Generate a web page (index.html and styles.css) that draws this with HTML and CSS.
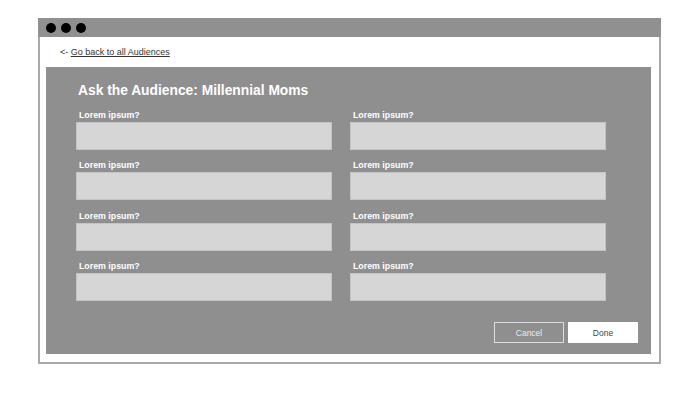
FILE: index.html
```html
<!DOCTYPE html>
<html>
<head>
<meta charset="utf-8">
<link rel="stylesheet" href="styles.css">
</head>
<body>
<div class="page">
  <div class="window">
    <div class="titlebar">
      <span class="dot"></span><span class="dot"></span><span class="dot"></span>
    </div>
    <div class="content">
      <div class="backrow">&lt;- <a class="backlink" href="#">Go back to all Audiences</a></div>
      <div class="panel">
        <h1 class="title">Ask the Audience: Millennial Moms</h1>
        <div class="grid">
          <div class="field"><label class="label">Lorem ipsum?</label><div class="input"></div></div>
          <div class="field"><label class="label">Lorem ipsum?</label><div class="input"></div></div>
          <div class="field"><label class="label">Lorem ipsum?</label><div class="input"></div></div>
          <div class="field"><label class="label">Lorem ipsum?</label><div class="input"></div></div>
          <div class="field"><label class="label">Lorem ipsum?</label><div class="input"></div></div>
          <div class="field"><label class="label">Lorem ipsum?</label><div class="input"></div></div>
          <div class="field"><label class="label">Lorem ipsum?</label><div class="input"></div></div>
          <div class="field"><label class="label">Lorem ipsum?</label><div class="input"></div></div>
        </div>
        <div class="actions">
          <button class="btn btn-cancel">Cancel</button>
          <button class="btn btn-done">Done</button>
        </div>
      </div>
    </div>
  </div>
</div>
</body>
</html>
```
FILE: styles.css
```css
html, body {
  margin: 0;
  padding: 0;
  background: #ffffff;
  font-family: "Liberation Sans", Arial, Helvetica, sans-serif;
}
.page {
  padding: 18px 0 0 38px;
}
.window {
  width: 623px;
}
.titlebar {
  height: 19px;
  background: #909090;
  display: flex;
  align-items: center;
  padding-left: 8px;
  gap: 5px;
}
.dot {
  width: 10px;
  height: 10px;
  border-radius: 50%;
  background: #000;
}
.content {
  border: 2px solid #a9a9a9;
  border-top: none;
  padding: 0 8px 8px 6px;
  height: 327px;
  box-sizing: border-box;
}
.backrow {
  height: 30px;
  display: flex;
  align-items: center;
  padding-left: 14px;
  font-size: 9px;
  color: #333;
  white-space: pre;
}
.backlink {
  color: #333;
  text-decoration: underline;
}
.panel {
  background: #8f8f8f;
  height: 287px;
  box-sizing: border-box;
  padding: 14.5px 13px 11px 30px;
  display: flex;
  flex-direction: column;
}
.title {
  margin: 0 0 11.5px 2px;
  font-size: 13.8px;
  line-height: 17px;
  font-weight: bold;
  color: #fff;
}
.grid {
  display: grid;
  grid-template-columns: 256px 256px;
  column-gap: 18px;
  row-gap: 10.4px;
}
.field {
  display: flex;
  flex-direction: column;
}
.label {
  font-size: 8.8px;
  line-height: 11px;
  font-weight: bold;
  color: #fff;
  margin: 0 0 1px 3px;
}
.input {
  height: 28px;
  background: #d6d6d6;
  border: 1px solid #c4c4c4;
  box-sizing: border-box;
}
.actions {
  margin-top: auto;
  display: flex;
  justify-content: flex-end;
  gap: 4px;
}
.btn {
  width: 70px;
  height: 21px;
  font-family: "Liberation Sans", Arial, sans-serif;
  font-size: 8.5px;
  padding: 0;
  box-sizing: border-box;
}
.btn-cancel {
  background: transparent;
  border: 1.5px solid #dedede;
  color: #ebebeb;
}
.btn-done {
  background: #fff;
  border: 1px solid #fff;
  color: #444;
}
```
